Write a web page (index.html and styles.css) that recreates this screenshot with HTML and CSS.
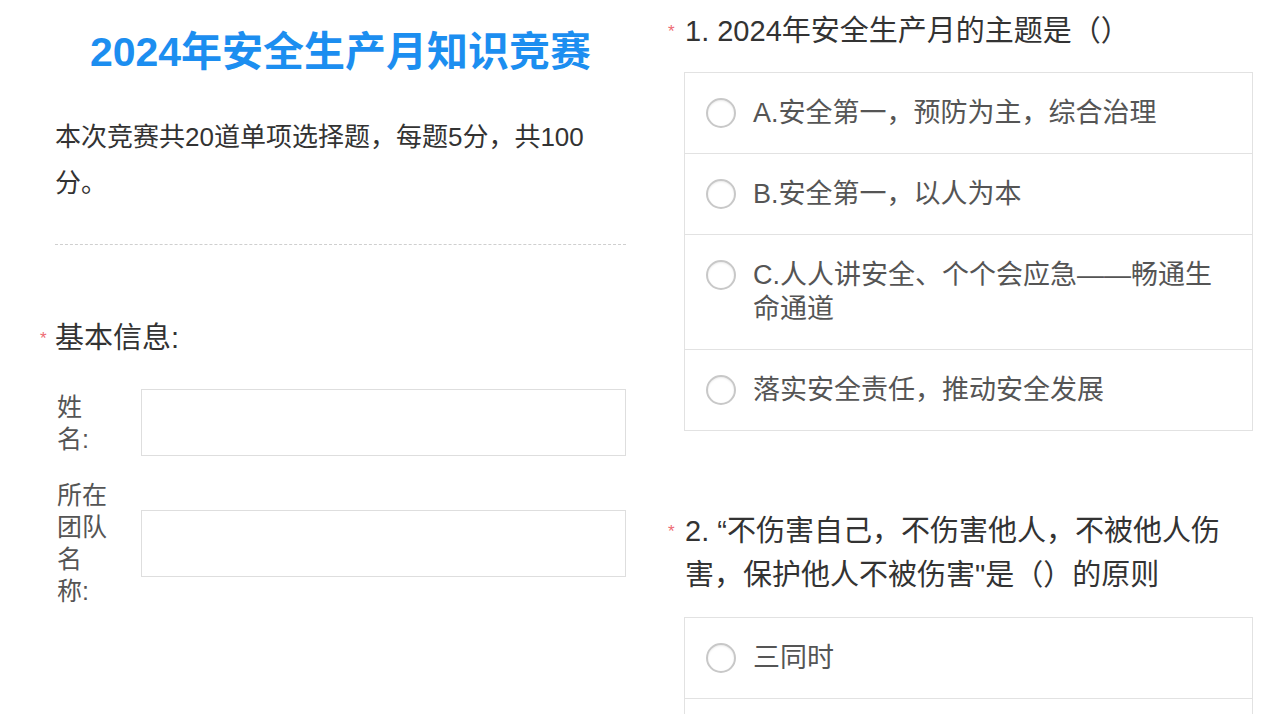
FILE: index.html
```html
<!DOCTYPE html>
<html lang="zh-CN">
<head>
<meta charset="utf-8">
<title>2024年安全生产月知识竞赛</title>
<link rel="stylesheet" href="styles.css">
</head>
<body>
<div class="page">
  <section class="left">
    <h1 class="title">2024年安全生产月知识竞赛</h1>
    <p class="intro">本次竞赛共20道单项选择题，每题5分，共100分。</p>
    <div class="divider"></div>
    <div class="qhead"><span class="req">*</span><span class="qtext">基本信息:</span></div>
    <div class="form">
      <div class="frow">
        <label class="flabel">姓名:</label>
        <div class="finput"></div>
      </div>
      <div class="frow">
        <label class="flabel">所在团队名称:</label>
        <div class="finput"></div>
      </div>
    </div>
  </section>
  <section class="right">
    <div class="question">
      <div class="qhead"><span class="req">*</span><span class="qtext">1. 2024年安全生产月的主题是（）</span></div>
      <div class="options">
        <div class="opt"><span class="radio"></span><span class="otext">A.安全第一，预防为主，综合治理</span></div>
        <div class="opt"><span class="radio"></span><span class="otext">B.安全第一，以人为本</span></div>
        <div class="opt"><span class="radio"></span><span class="otext">C.人人讲安全、个个会应急——畅通生命通道</span></div>
        <div class="opt"><span class="radio"></span><span class="otext">落实安全责任，推动安全发展</span></div>
      </div>
    </div>
    <div class="question q2">
      <div class="qhead"><span class="req">*</span><span class="qtext">2. “不伤害自己，不伤害他人，不被他人伤害，保护他人不被伤害"是（）的原则</span></div>
      <div class="options">
        <div class="opt"><span class="radio"></span><span class="otext">三同时</span></div>
        <div class="opt opt-empty"><span class="radio"></span></div>
      </div>
    </div>
  </section>
</div>
</body>
</html>
```

FILE: styles.css
```css
html, body {
  margin: 0;
  padding: 0;
  background: #ffffff;
  height: 714px;
  overflow: hidden;
}
body {
  font-family: "Liberation Sans", "Noto Sans CJK SC", sans-serif;
  color: #333333;
}
.page {
  display: grid;
  grid-template-columns: 586px 585px;
  column-gap: 42px;
  padding-left: 40px;
  align-items: start;
}
.left {
  display: flex;
  flex-direction: column;
}
.title {
  margin: 22px 0 0 15px;
  font-size: 41px;
  line-height: 60px;
  font-weight: 700;
  color: #1c8ef0;
  text-align: center;
}
.intro {
  margin: 32px 0 0 15px;
  padding-right: 30px;
  font-size: 26px;
  line-height: 46px;
  color: #333333;
}
.divider {
  margin: 38px 0 0 15px;
  border-top: 1px dashed #cfcfcf;
  height: 0;
}
.left .qhead {
  margin-top: 73px;
}
.qhead {
  display: flex;
  align-items: flex-start;
}
.req {
  width: 15px;
  flex: none;
  color: #ee6b73;
  font-size: 17px;
  line-height: 42px;
}
.qtext {
  font-size: 29px;
  line-height: 40px;
  color: #333333;
}
.form {
  margin: 29px 0 0 15px;
  display: flex;
  flex-direction: column;
  gap: 23px;
}
.frow {
  display: flex;
  align-items: center;
  gap: 30px;
}
.flabel {
  width: 54px;
  flex: none;
  padding-left: 2px;
  font-size: 25px;
  line-height: 32px;
  color: #555555;
}
.finput {
  flex: 1;
  height: 65px;
  border: 1px solid #dedede;
  background: #ffffff;
}
.right {
  display: flex;
  flex-direction: column;
  padding-top: 9px;
}
.right .qhead .req {
  width: 17px;
  line-height: 46px;
}
.right .qtext {
  line-height: 44px;
  padding-right: 20px;
}
.options {
  margin: 17px 0 0 16px;
  border: 1px solid #e2e2e2;
  display: flex;
  flex-direction: column;
}
.opt {
  display: flex;
  align-items: flex-start;
  padding: 23px 40px 23px 21px;
  border-top: 1px solid #e2e2e2;
}
.opt:first-child {
  border-top: none;
}
.opt-empty {
  min-height: 34px;
}
.radio {
  flex: none;
  width: 26px;
  height: 26px;
  margin-top: 2px;
  border: 2px solid #c8c8c8;
  border-radius: 50%;
  background: #ffffff;
  box-shadow: inset 0 1px 2px rgba(0,0,0,0.08);
}
.otext {
  margin-left: 17px;
  font-size: 27px;
  line-height: 34px;
  color: #555555;
}
.q2 {
  margin-top: 78px;
}
.q2 .options {
  margin-top: 20px;
}
```
